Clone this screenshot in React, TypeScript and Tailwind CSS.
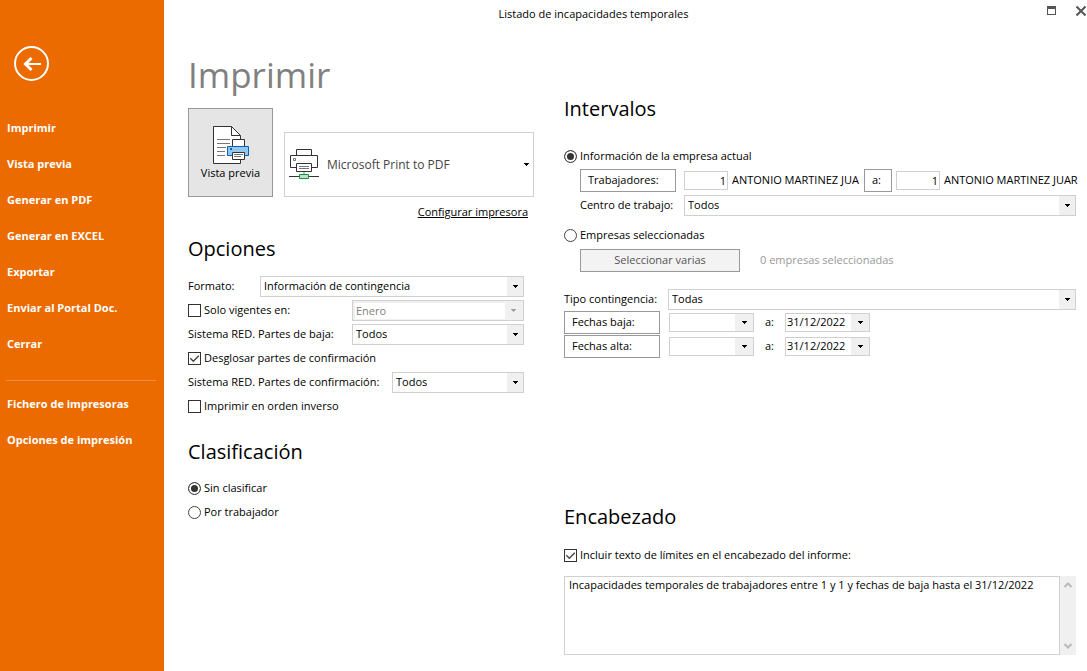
import React, { useId, useState } from "react";

const menu = [
  "Imprimir",
  "Vista previa",
  "Generar en PDF",
  "Generar en EXCEL",
  "Exportar",
  "Enviar al Portal Doc.",
  "Cerrar",
];

const printerMenu = ["Fichero de impresoras", "Opciones de impresión"];

function Arrow() {
  return (
    <svg width="5" height="3" viewBox="0 0 5 3" fill="currentColor" shapeRendering="crispEdges">
      <path d="M0 0h5v1h-1v1h-1v1h-1v-1h-1v-1h-1z" />
    </svg>
  );
}

type SelectProps = {
  id?: string;
  label?: string;
  options: string[];
  disabled?: boolean;
  className?: string;
};

function Select({ id, label, options, disabled, className = "" }: SelectProps) {
  return (
    <div
      className={`grid h-[21px] border border-[#d0d0d0] ${disabled ? "bg-[#f0f0f0] p-[2px]" : "bg-white"} ${className}`}
    >
      <select
        id={id}
        aria-label={label}
        disabled={disabled}
        className="col-start-1 row-start-1 h-full w-full min-w-0 appearance-none bg-white pl-[3px] pr-4 outline-none disabled:pl-px disabled:text-[#808080] disabled:opacity-100"
      >
        {options.map((option) => (
          <option key={option}>{option}</option>
        ))}
      </select>
      <span
        className={`pointer-events-none col-start-1 row-start-1 flex w-4 items-center justify-center justify-self-end bg-[#f0f0f0] ${disabled ? "text-[#a0a0a0]" : "text-black"}`}
      >
        <Arrow />
      </span>
    </div>
  );
}

function Checkbox({ label, checked = false }: { label: string; checked?: boolean }) {
  const id = useId();
  return (
    <div className="flex h-6 items-center gap-[3px]">
      <span className="grid size-[13px]">
        <input
          id={id}
          type="checkbox"
          defaultChecked={checked}
          className="peer col-start-1 row-start-1 size-[13px] appearance-none border border-[#333] bg-white"
        />
        <svg
          viewBox="0 0 13 13"
          className="pointer-events-none invisible col-start-1 row-start-1 size-[13px] peer-checked:visible"
          fill="none"
          stroke="#444"
          strokeWidth="1.3"
        >
          <path d="M2.3 6.3l3 3L10.8 3.7" />
        </svg>
      </span>
      <label htmlFor={id}>{label}</label>
    </div>
  );
}

type RadioProps = { name: string; label: string; checked: boolean; onChange: () => void };

function Radio({ name, label, checked, onChange }: RadioProps) {
  const id = useId();
  return (
    <div className="flex h-6 items-center gap-[3px]">
      <input
        id={id}
        type="radio"
        name={name}
        checked={checked}
        onChange={onChange}
        className="size-[13px] appearance-none rounded-full border border-[#444] bg-white checked:bg-[#333] checked:shadow-[inset_0_0_0_2px_white]"
      />
      <label htmlFor={id}>{label}</label>
    </div>
  );
}

function DateRow({ label }: { label: string }) {
  return (
    <div className="flex h-6 items-center">
      <button type="button" className="h-[23px] w-24 border border-[#999] pl-[7px] text-left">
        {label}
      </button>
      <DateField label={`${label} desde`} value="" className="ml-[9px]" />
      <span className="w-[31px] pl-[11px]">a:</span>
      <DateField label={`${label} hasta`} value="31/12/2022" />
    </div>
  );
}

function DateField({ label, value, className = "" }: { label: string; value: string; className?: string }) {
  return (
    <div className={`flex h-[19px] w-[85px] border border-[#d0d0d0] ${className}`}>
      <input aria-label={label} defaultValue={value} className="w-full min-w-0 pl-px outline-none" />
      <button
        type="button"
        aria-label={`Abrir calendario ${label}`}
        className="flex w-[18px] shrink-0 items-center justify-center bg-[#f0f0f0]"
      >
        <Arrow />
      </button>
    </div>
  );
}

function PreviewIcon() {
  return (
    <svg width="36" height="39" viewBox="0 0 36 39" fill="none">
      <path d="M0.500 0.500h18l9 9v28h-27z" fill="#fff" stroke="#333" />
      <path d="M18.500 0.500v9h9" stroke="#333" />
      <path d="M4 13.500h13M4 17.500h13M4 21.500h9M4 25.500h8M4 29.500h8" stroke="#777" />
      <path d="M19.500 13.500h12v7h-12z" fill="#fff" stroke="#333" />
      <path d="M14.500 20.500h21v9h-21z" fill="#91c8f2" stroke="#0f5fb0" />
      <path d="M17 22h2v2h-2z" fill="#0f5fb0" />
      <path d="M19.500 26.500h12v7h-12z" fill="#fff" stroke="#333" />
      <path d="M21 28.500h9M21 30.500h7" stroke="#777" />
    </svg>
  );
}

function PrinterIcon() {
  return (
    <svg width="30" height="31" viewBox="0 0 30 31" fill="none" className="shrink-0">
      <path d="M7.500 6.500v-6h15v6" stroke="#333" />
      <path d="M1.500 6.500h27v12h-27z" fill="#fff" stroke="#333" />
      <path d="M4.500 9.500h2v2h-2z" stroke="#777" />
      <path d="M7.500 14.500h15v8h-15z" fill="#fff" stroke="#333" />
      <path d="M10 17.500h10M10 19.500h10" stroke="#777" />
      <path d="M15 23v2" stroke="#bbb" strokeWidth="2" />
      <path d="M0 27.500h30" stroke="#333" />
      <path d="M10.500 25.500h9v4h-9z" fill="#bfe0c2" stroke="#109648" />
    </svg>
  );
}

function Sidebar() {
  return (
    <aside className="w-[164px] shrink-0 bg-[#eb6b00] pt-[46px] font-bold text-white">
      <button
        type="button"
        aria-label="Volver"
        className="ml-[14px] flex size-[35px] items-center justify-center rounded-full border-2 border-white"
      >
        <svg width="18" height="14" viewBox="0 0 18 14" fill="none" stroke="#fff">
          <path d="M2 7h16" strokeWidth="2" />
          <path d="M8.500 1L2.500 7l6 6" strokeWidth="3" />
        </svg>
      </button>
      <nav className="mt-[29px]">
        {menu.map((item) => (
          <a key={item} href="#" className="flex h-9 items-center pl-[7px]">
            {item}
          </a>
        ))}
        <hr className="mt-[18px] mr-2 mb-[5px] ml-[6px] border-[#f08e3d]" />
        {printerMenu.map((item) => (
          <a key={item} href="#" className="flex h-9 items-center pl-[7px]">
            {item}
          </a>
        ))}
      </nav>
    </aside>
  );
}

function TitleBar() {
  return (
    <header className="flex h-7 items-center">
      <p className="flex-1 text-center">Listado de incapacidades temporales</p>
      <div className="flex h-5 w-16 items-start justify-end gap-5 pt-[2px] pr-[1px]">
        <button type="button" aria-label="Maximizar">
          <svg width="9" height="9" viewBox="0 0 9 9" fill="none" shapeRendering="crispEdges">
            <path d="M0.500 0.500h8v8h-8z" stroke="#555" />
            <path d="M0 0h9v3h-9z" fill="#555" />
          </svg>
        </button>
        <button type="button" aria-label="Cerrar ventana">
          <svg width="10" height="10" viewBox="0 0 10 10" stroke="#555" strokeWidth="2">
            <path d="M0.500 0.500l9 9M9.500 0.500l-9 9" />
          </svg>
        </button>
      </div>
    </header>
  );
}

function PrintOptions() {
  const [order, setOrder] = useState("none");

  return (
    <section className="w-[346px] shrink-0 pt-[23px]">
      <h1 className="flex h-12 items-center text-[35px] text-[#808080]">Imprimir</h1>
      <div className="mt-[9px] flex items-end justify-between">
        <button
          type="button"
          className="flex h-[89px] w-[85px] flex-col items-center justify-center border border-[#999] bg-[#e5e5e5] pt-px"
        >
          <PreviewIcon />
          <span className="leading-4">Vista previa</span>
        </button>
        <div className="grid h-[65px] w-[250px] items-center border border-[#d0d0d0]">
          <select
            aria-label="Impresora"
            className="col-start-1 row-start-1 h-full w-full appearance-none pl-[42px] text-[12px] text-[#444] outline-none"
          >
            <option>Microsoft Print to PDF</option>
          </select>
          <span className="pointer-events-none col-start-1 row-start-1 flex items-center justify-between pr-1 pl-1">
            <PrinterIcon />
            <Arrow />
          </span>
        </div>
      </div>
      <div className="flex h-[30px] items-center justify-end pr-[6px]">
        <a href="#" className="underline">
          Configurar impresora
        </a>
      </div>

      <h2 className="mt-[6px] mb-[9px] flex h-8 items-center text-[20px]">Opciones</h2>
      <div className="flex h-6 items-center">
        <label htmlFor="formato" className="w-[72px]">
          Formato:
        </label>
        <Select id="formato" options={["Información de contingencia"]} className="w-[264px]" />
      </div>
      <div className="flex h-6 items-center">
        <div className="w-[164px]">
          <Checkbox label="Solo vigentes en:" />
        </div>
        <Select label="Mes" options={["Enero"]} disabled className="w-[172px]" />
      </div>
      <div className="flex h-6 items-center">
        <label htmlFor="baja" className="w-[164px] whitespace-nowrap">
          Sistema RED. Partes de baja:
        </label>
        <Select id="baja" options={["Todos"]} className="w-[172px]" />
      </div>
      <Checkbox label="Desglosar partes de confirmación" checked />
      <div className="flex h-6 items-center">
        <label htmlFor="confirmacion" className="w-[204px] whitespace-nowrap">
          Sistema RED. Partes de confirmación:
        </label>
        <Select id="confirmacion" options={["Todos"]} className="w-[132px]" />
      </div>
      <Checkbox label="Imprimir en orden inverso" />

      <h2 className="mt-[18px] mb-2 flex h-8 items-center text-[20px]">Clasificación</h2>
      <Radio
        name="order"
        label="Sin clasificar"
        checked={order === "none"}
        onChange={() => setOrder("none")}
      />
      <Radio
        name="order"
        label="Por trabajador"
        checked={order === "worker"}
        onChange={() => setOrder("worker")}
      />
    </section>
  );
}

function Ranges() {
  const [company, setCompany] = useState("current");

  return (
    <section className="min-w-0 flex-1 pt-[65px]">
      <h2 className="mb-[19px] flex h-8 items-center text-[20px]">Intervalos</h2>
      <Radio
        name="company"
        label="Información de la empresa actual"
        checked={company === "current"}
        onChange={() => setCompany("current")}
      />
      <div className="ml-4 flex h-6 items-center">
        <button type="button" className="h-[23px] w-24 border border-[#999] pl-[7px] text-left">
          Trabajadores:
        </button>
        <input
          aria-label="Trabajador desde"
          defaultValue="1"
          className="ml-2 h-[19px] w-11 border border-[#d0d0d0] pr-px text-right outline-none"
        />
        <span className="ml-1 min-w-0 flex-1 basis-0 whitespace-nowrap">ANTONIO MARTINEZ JUA</span>
        <button type="button" className="h-[23px] w-7 border border-[#999] pl-[7px] text-left">
          a:
        </button>
        <input
          aria-label="Trabajador hasta"
          defaultValue="1"
          className="ml-1 h-[19px] w-11 border border-[#d0d0d0] pr-px text-right outline-none"
        />
        <span className="ml-1 min-w-0 flex-1 basis-0 whitespace-nowrap">ANTONIO MARTINEZ JUAR</span>
      </div>
      <div className="mt-px ml-4 flex h-6 items-center">
        <label htmlFor="centro" className="w-[104px]">
          Centro de trabajo:
        </label>
        <Select id="centro" options={["Todos"]} className="flex-1" />
      </div>
      <div className="mt-[6px]">
        <Radio
          name="company"
          label="Empresas seleccionadas"
          checked={company === "selected"}
          onChange={() => setCompany("selected")}
        />
      </div>
      <div className="mt-px ml-4 flex h-6 items-center gap-5">
        <button type="button" className="h-[23px] w-40 border border-[#999] bg-[#f3f3f3] text-[#555]">
          Seleccionar varias
        </button>
        <span className="text-[#999]">0 empresas seleccionadas</span>
      </div>

      <div className="mt-4 flex h-[22px] items-center">
        <label htmlFor="tipo" className="w-[104px] whitespace-nowrap">
          Tipo contingencia:
        </label>
        <Select id="tipo" options={["Todas"]} className="flex-1" />
      </div>
      <DateRow label="Fechas baja:" />
      <DateRow label="Fechas alta:" />

      <h2 className="mt-[143px] mb-[10px] flex h-8 items-center text-[20px]">Encabezado</h2>
      <Checkbox label="Incluir texto de límites en el encabezado del informe:" checked />
      <div className="mt-[9px] flex h-[79px]">
        <textarea
          aria-label="Texto del encabezado"
          defaultValue="Incapacidades temporales de trabajadores entre 1 y 1 y fechas de baja hasta el 31/12/2022"
          className="min-w-0 flex-1 resize-none overflow-hidden border border-[#d0d0d0] px-1 outline-none"
        />
        <div className="flex w-4 flex-col items-center justify-between bg-[#f0f0f0] py-[6px]">
          <svg width="8" height="6" viewBox="0 0 8 6" fill="none" stroke="#bbb" strokeWidth="2">
            <path d="M0.500 5L4 1.500L7.500 5" />
          </svg>
          <svg width="8" height="6" viewBox="0 0 8 6" fill="none" stroke="#bbb" strokeWidth="2">
            <path d="M0.500 1L4 4.500L7.500 1" />
          </svg>
        </div>
      </div>
    </section>
  );
}

function App() {
  return (
    <div className="flex min-h-screen bg-white font-['Open_Sans','Noto_Sans',sans-serif] text-[11px] leading-4 text-black">
      <Sidebar />
      <main className="min-w-0 flex-1">
        <TitleBar />
        <div className="flex gap-[30px] pr-[11px] pb-4 pl-6">
          <PrintOptions />
          <Ranges />
        </div>
      </main>
    </div>
  );
}

export default App;
